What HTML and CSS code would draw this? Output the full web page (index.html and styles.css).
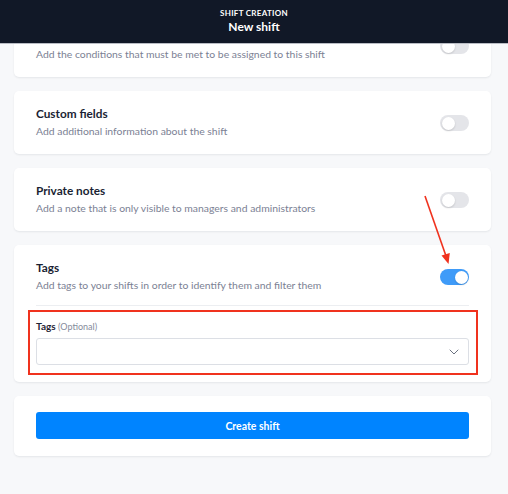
FILE: index.html
```html
<!DOCTYPE html>
<html>
<head>
<meta charset="utf-8">
<link rel="stylesheet" href="styles.css">
</head>
<body>
<header class="topbar">
  <div class="eyebrow">SHIFT CREATION</div>
  <div class="heading">New shift</div>
</header>
<main class="page">
  <section class="card">
    <div class="row">
      <div class="text">
        <div class="title">Conditions</div>
        <div class="desc">Add the conditions that must be met to be assigned to this shift</div>
      </div>
      <span class="toggle"></span>
    </div>
  </section>
  <section class="card">
    <div class="row">
      <div class="text">
        <div class="title">Custom fields</div>
        <div class="desc">Add additional information about the shift</div>
      </div>
      <span class="toggle"></span>
    </div>
  </section>
  <section class="card">
    <div class="row">
      <div class="text">
        <div class="title">Private notes</div>
        <div class="desc">Add a note that is only visible to managers and administrators</div>
      </div>
      <span class="toggle"></span>
    </div>
  </section>
  <section class="card card-tags">
    <div class="row">
      <div class="text">
        <div class="title">Tags</div>
        <div class="desc">Add tags to your shifts in order to identify them and filter them</div>
      </div>
      <span class="toggle on"></span>
    </div>
    <div class="sep"></div>
    <div class="field-box">
      <div class="label">Tags <span class="opt">(Optional)</span></div>
      <div class="select">
        <svg class="chev" width="10" height="6" viewBox="0 0 10 6"><path d="M1 1l4 4 4-4" fill="none" stroke="#6b7280" stroke-width="1" stroke-linecap="round" stroke-linejoin="round"/></svg>
      </div>
    </div>
  </section>
  <section class="card card-btn">
    <button class="btn">Create shift</button>
  </section>
</main>
<svg class="arrow" width="508" height="494" viewBox="0 0 508 494">
  <line x1="425" y1="196" x2="446" y2="256" stroke="#f0321e" stroke-width="1.6"/>
  <path d="M441.5 255.5 L448.5 264 L449.8 253 Z" fill="#f0321e"/>
</svg>
</body>
</html>
```
FILE: styles.css
```css
* { box-sizing: border-box; }
html, body { margin: 0; padding: 0; }
body {
  background: #f7f8fa;
  font-family: Lato, Inter, sans-serif;
  width: 508px;
  height: 494px;
  overflow: hidden;
  position: relative;
}
.topbar {
  position: absolute;
  top: 0; left: 0; right: 0;
  height: 44px;
  background: #111827;
  border-bottom: 1px solid #b9bcc4;
  color: #fff;
  text-align: center;
  padding-top: 8px;
  z-index: 2;
}
.eyebrow { font-size: 8px; font-weight: 700; letter-spacing: 0.3px; line-height: 10px; }
.heading { font-size: 12px; font-weight: 700; line-height: 16px; margin-top: 1px; }
.page {
  padding: 14px 17px 0 14px;
  display: flex;
  flex-direction: column;
  gap: 14px;
}
.card {
  background: #fff;
  border-radius: 5px;
  box-shadow: 0 1px 2px rgba(17, 24, 39, 0.08);
  padding: 15px 22px 14px 22px;
}
.row { display: flex; align-items: center; justify-content: space-between; }
.title { font-size: 11.8px; font-weight: 700; color: #1a1f33; line-height: 16px; }
.desc { font-size: 10.4px; color: #7b8194; line-height: 18px; }
.toggle {
  width: 29px; height: 16px; border-radius: 8px;
  background: #e4e5e9; position: relative; flex: none;
}
.toggle::after {
  content: ""; position: absolute; top: 1.5px; left: 1.5px;
  width: 13px; height: 13px; border-radius: 50%; background: #fff;
  box-shadow: 0 1px 2px rgba(0,0,0,0.15);
}
.toggle.on { background: #3f9bf8; }
.toggle.on::after { left: 14.5px; }
.card-tags { padding-bottom: 7px; }
.sep { height: 1px; background: #eceef1; margin-top: 11px; }
.field-box {
  border: 2px solid #f0321e;
  margin: 4px -9px 0 -8px;
  padding: 7px 7px 8px 6px;
}
.label { font-size: 10px; font-weight: 700; color: #1f2435; line-height: 14px; }
.opt { font-weight: 400; color: #858b9c; font-size: 9px; }
.select {
  margin-top: 4px;
  height: 27px;
  border: 1px solid #dcdfe5;
  border-radius: 3px;
  display: flex; align-items: center; justify-content: flex-end;
  padding-right: 9px;
}
.card-btn { padding: 16px 22px 17px 22px; }
.btn {
  display: block; width: 100%; height: 27px;
  background: #0084ff; border: none; border-radius: 3px;
  color: #fff; font-family: inherit; font-size: 10.5px; font-weight: 700;
}
.arrow { position: absolute; top: 0; left: 0; z-index: 3; pointer-events: none; }
```
